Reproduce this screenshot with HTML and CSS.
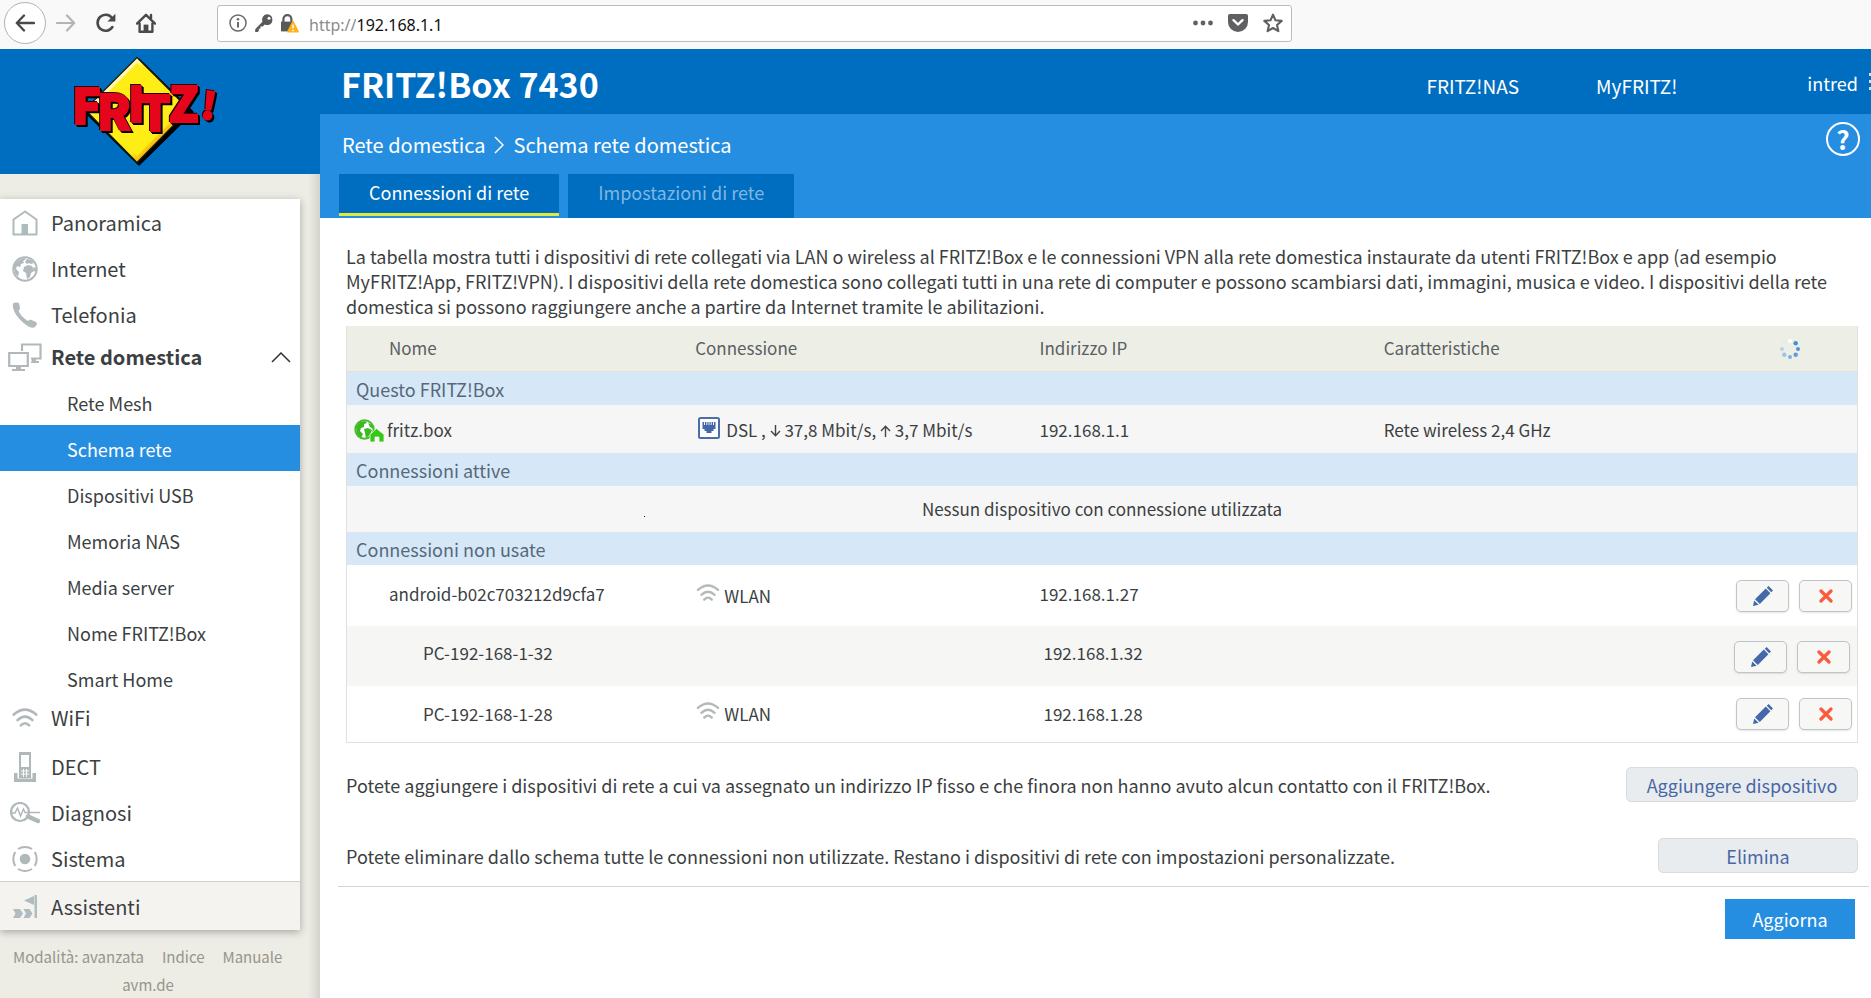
FILE: index.html
```html
<!DOCTYPE html>
<html lang="it">
<head>
<meta charset="utf-8">
<title>FRITZ!Box 7430</title>
<link rel="stylesheet" href="styles.css">
</head>
<body>
<svg class="defs" aria-hidden="true">
  <symbol id="wifi" viewBox="0 0 26 20"><g fill="none" stroke="currentColor" stroke-width="2.6" stroke-linecap="round"><path d="M1.8 6.6Q13-3.2 24.2 6.6"/><path d="M5.6 12Q13 5.2 20.4 12"/><path d="M8.8 17.4Q13 13 17.2 17.4"/></g></symbol>
  <symbol id="pencil" viewBox="0 0 20 20"><path fill="#4468a8" d="M0 20l1.200-5.600 4.400 4.400zM2 13.200L12.800 2.600l4.600 4.600L6.800 18zM13.800 1.800L15.600 0 20 4.400l-1.800 1.800z"/></symbol>
  <symbol id="cross" viewBox="0 0 14 14"><path d="M2 2l10 10M12 2L2 12" stroke="#fb5b3c" stroke-width="3.200" stroke-linecap="round"/></symbol>
</svg>

<div class="browser">
  <button class="back" aria-label="Indietro"><svg width="20" height="18" viewBox="0 0 20 18"><path d="M19 9H2M9 1.500L1.800 9 9 16.500" fill="none" stroke="#4a4a4c" stroke-width="2.400" stroke-linecap="round" stroke-linejoin="round"/></svg></button>
  <button class="tool" aria-label="Avanti"><svg width="20" height="18" viewBox="0 0 20 18"><path d="M1 9h17M11 1.500L18.200 9 11 16.500" fill="none" stroke="#b4b4b5" stroke-width="2.200" stroke-linecap="round" stroke-linejoin="round"/></svg></button>
  <button class="tool" aria-label="Ricarica"><svg width="20" height="20" viewBox="0 0 20 20"><path d="M16.400 14A8 8 0 1 1 16 5" fill="none" stroke="#4a4a4c" stroke-width="2.600" stroke-linecap="round"/><path d="M19.400.8v7.800h-8z" fill="#4a4a4c"/></svg></button>
  <button class="tool" aria-label="Pagina iniziale"><svg width="20" height="20" viewBox="0 0 20 20"><path d="M1 10.600L10 1.800l9 8.800M15 5.500V2M3.600 10.500v8.200h12.800v-8.200" fill="none" stroke="#4a4a4c" stroke-width="2.400" stroke-linecap="round" stroke-linejoin="round"/><path d="M7.600 19v-7.400h4.800V19z" fill="#4a4a4c"/></svg></button>
  <div class="urlbar">
    <svg width="18" height="18" viewBox="0 0 18 18"><circle cx="9" cy="9" r="8" fill="none" stroke="#6a6a6b" stroke-width="1.500"/><path d="M9 8v5.500" stroke="#6a6a6b" stroke-width="2"/><circle cx="9" cy="5.200" r="1.300" fill="#6a6a6b"/></svg>
    <svg width="18" height="18" viewBox="0 0 18 18"><path d="M12.400.3a5.400 5.400 0 0 1 1 10.600c-1.400.3-2.600 0-3.600-.5L7.600 12.600H5.400v2.200H3.800V17L2.600 18H.2v-2.800l7.200-7.400A5.400 5.400 0 0 1 12.400.3z" fill="#5a5a5b"/><circle cx="14" cy="4.200" r="1.500" fill="#fff"/></svg>
    <svg width="18" height="19" viewBox="0 0 18 19"><path d="M2.400 8V5.200a4 4 0 0 1 8 0V8" fill="none" stroke="#5a5a5b" stroke-width="2.200"/><path d="M0 7.600h12V17.400H0z" fill="#5a5a5b"/><path d="M12 7.600l5.200 10.200H6.800z" fill="#fdb21c" stroke="#fdb21c" stroke-width="1.600" stroke-linejoin="round"/><path d="M12 10.500v3.700M12 15.700v1.500" stroke="#fff" stroke-width="1.500"/></svg>
    <label for="url">http://</label><input id="url" type="text" value="192.168.1.1">
    <button class="bare" aria-label="Altre azioni"><svg width="20" height="6" viewBox="0 0 20 6"><g fill="#606062"><circle cx="2.500" cy="3" r="2.400"/><circle cx="10" cy="3" r="2.400"/><circle cx="17.500" cy="3" r="2.400"/></g></svg></button>
    <button class="bare" aria-label="Salva in Pocket"><svg width="20" height="18" viewBox="0 0 20 18"><path d="M1.800 0h16.400Q20 0 20 1.800V8A10 10 0 0 1 0 8V1.800Q0 0 1.800 0z" fill="#606062"/><path d="M5.500 6.200L10 10.500l4.500-4.300" fill="none" stroke="#fff" stroke-width="2.400" stroke-linecap="round" stroke-linejoin="round"/></svg></button>
    <button class="bare" aria-label="Aggiungi ai segnalibri"><svg width="20" height="20" viewBox="0 0 20 20"><path d="M10 1.600l2.500 5.700 6.200.6-4.700 4.100 1.400 6.200L10 15l-5.400 3.200L6 12 1.300 7.900l6.200-.6z" fill="none" stroke="#606062" stroke-width="2.100" stroke-linejoin="round"/></svg></button>
  </div>
</div>

<div class="app">
  <aside class="side">
    <div class="brand">
      <svg class="logo" viewBox="0 0 150 112" role="img" aria-label="FRITZ!">
        <defs><linearGradient id="y" x1="0" y1="0" x2="1" y2="1"><stop offset="0" stop-color="#fff"/><stop offset=".28" stop-color="#fff9b0"/><stop offset=".32" stop-color="#ffee1c"/><stop offset=".68" stop-color="#ffec14"/><stop offset=".76" stop-color="#f5ae10"/><stop offset="1" stop-color="#f0a010"/></linearGradient></defs>
        <path d="M66 5l53 52-53 52-51-50z" fill="#000" stroke="#000" stroke-width="3" stroke-linejoin="round"/>
        <path d="M64 2.500l52 52-52 53-52-53z" fill="url(#y)" stroke="#1b1b00" stroke-width="1.200" stroke-linejoin="round"/>
        <path d="M64 8l46 46.500L64 101 18 54.500z" fill="#ffee16"/>
        <text class="letters" font-size="48" x="-1 24 55 67 96 127" y="69 75 67 76 67 63" rotate="0 0 0 0 0 8">FRITZ<tspan font-size="36">!</tspan></text>
      </svg>
    </div>
    <nav class="menu">
      <a class="item" href="#"><svg width="26" height="26" viewBox="0 0 26 26"><path d="M1.500 9.500L13 1.500l11.500 8V24.500h-23z" fill="none" stroke="#b0b9bb" stroke-width="2" stroke-linejoin="round"/><path d="M9.500 14h6.500v10H9.500z" fill="#acbcbe"/></svg>Panoramica</a>
      <a class="item" href="#"><svg width="26" height="26" viewBox="0 0 26 26"><circle cx="13" cy="13" r="11.700" fill="none" stroke="#b0b9bb" stroke-width="2"/><path d="M3 8l4-4 5-2 2 1-3 2 1 2-3 1-1 3-3-1-1 3 3 3-1 5-3-4-1-6zM15 3l4 1 3 3-3 1-2-1-2 1-2-2zM12 11l4-2 4 1 2 5-3 2-1 4-3 2-1-6-3-2zM21 11l3 1v4l-2-1z" fill="#b0b9bb"/></svg>Internet</a>
      <a class="item" href="#"><svg width="26" height="26" viewBox="0 0 26 26"><path d="M2 .8L5.500.5Q7 .6 7.300 2L8 6.400Q8 7.800 6.500 8.600 8.500 14.500 16 19q1.600-1.700 3-1.200l5 2.200q1.400.8.900 2.200-1 3-4 3.600-3 .2-9-4.500Q2 13 .8 4.500 .5 1.500 2 .8z" fill="#b3babb"/></svg>Telefonia</a>
      <a class="item open" href="#"><svg width="34" height="29" viewBox="0 0 34 29"><g fill="none" stroke="#b0b8ba" stroke-width="2.200"><path d="M14 8V1.500h18.500v14H23"/><path d="M1.200 10h18.600v13H1.200z"/></g><path d="M8 23h5v3h4v2H4v-2h4zM24 16h4v2h3v2h-8z" fill="#b0b8ba"/></svg>Rete domestica<svg class="caret" width="20" height="11" viewBox="0 0 20 11"><path d="M1 10l9-9 9 9" fill="none" stroke="#333" stroke-width="1.500"/></svg></a>
      <a class="sub" href="#">Rete Mesh</a>
      <a class="sub current" href="#">Schema rete</a>
      <a class="sub" href="#">Dispositivi USB</a>
      <a class="sub" href="#">Memoria NAS</a>
      <a class="sub" href="#">Media server</a>
      <a class="sub" href="#">Nome FRITZ!Box</a>
      <a class="sub" href="#">Smart Home</a>
      <a class="item wifi" href="#"><svg width="26" height="20"><use href="#wifi"/></svg>WiFi</a>
      <a class="item" href="#"><svg width="22" height="30" viewBox="0 0 22 30"><path d="M0 21h3.500v5.500h15V21H22v9H0z" fill="#b0b8ba"/><path d="M5 0h12v26H5zM7 3v12h8V3z" fill="#b0b8ba" fill-rule="evenodd"/><path d="M7 19h8M7 22h8M9.500 17v8M12.500 17v8" stroke="#fff" stroke-width=".9"/></svg>DECT</a>
      <a class="item" href="#"><svg width="30" height="22" viewBox="0 0 30 22"><circle cx="10" cy="10" r="9" fill="none" stroke="#b0b8ba" stroke-width="2.200"/><path d="M1 11h4l2.500-5 3 8 3-7 1.500 3.500H30" fill="none" stroke="#b0b8ba" stroke-width="1.400"/><path d="M18 14.500l10 4.500" stroke="#b0b8ba" stroke-width="4.500" stroke-linecap="round"/></svg>Diagnosi</a>
      <a class="item" href="#"><svg width="26" height="26" viewBox="0 0 26 26"><circle cx="13" cy="13" r="5.300" fill="#b0b8ba"/><g fill="none" stroke="#b0b8ba" stroke-width="2"><path d="M6 3Q13-1 20 3M6 23Q13 27 20 23M3.200 6Q-.6 13 3.200 20M22.800 6Q26.600 13 22.800 20"/></g></svg>Sistema</a>
      <a class="item last" href="#"><svg width="26" height="26" viewBox="0 0 26 26"><path d="M22.500 1H25v23h-2.500zM12 6.500L22 2v9zM1 15h7l3 4.500L8 24H1l2.500-4.500zM11.500 15h6l3 4.500-3 4.500h-6l2.500-4.500z" fill="#b0bcbf"/></svg>Assistenti</a>
    </nav>
    <footer class="foot"><a href="#">Modalità: avanzata</a><a href="#">Indice</a><a href="#">Manuale</a><a class="avm" href="#">avm.de</a></footer>
  </aside>

  <div class="page">
    <header class="top">
      <h1>FRITZ!Box 7430</h1>
      <a class="toplink" href="#">FRITZ!NAS</a>
      <a class="toplink my" href="#">MyFRITZ!</a>
      <a class="user" href="#">intred</a>
      <svg class="dots" width="2" height="22" viewBox="0 0 2 22"><path d="M0 2h2v3H0zM0 9h2v3H0zM0 16h2v3H0z" fill="#cfe4f6"/></svg>
    </header>
    <div class="subhead">
      <div class="crumbs"><a href="#">Rete domestica</a><svg width="10" height="18" viewBox="0 0 10 18"><path d="M1 1l8 8-8 8" fill="none" stroke="#fff" stroke-width="1.500"/></svg><span>Schema rete domestica</span>
        <button class="help" aria-label="Guida">?</button></div>
      <div class="tabs"><button class="tab active">Connessioni di rete</button><button class="tab">Impostazioni di rete</button></div>
    </div>
    <main class="content">
      <p class="intro">La tabella mostra tutti i dispositivi di rete collegati via LAN o wireless al FRITZ!Box e le connessioni VPN alla rete domestica instaurate da utenti FRITZ!Box e app (ad esempio MyFRITZ!App, FRITZ!VPN). I dispositivi della rete domestica sono collegati tutti in una rete di computer e possono scambiarsi dati, immagini, musica e video. I dispositivi della rete domestica si possono raggiungere anche a partire da Internet tramite le abilitazioni.</p>
      <table class="net">
        <colgroup><col class="c1"><col class="c2"><col class="c3"><col class="c4"><col class="c5"></colgroup>
        <thead><tr><th class="name">Nome</th><th>Connessione</th><th>Indirizzo IP</th><th>Caratteristiche</th><th class="spin"><svg width="20" height="20" viewBox="0 0 20 20"><circle cx="10" cy="2" r="2" fill="#fff"/><circle cx="15.700" cy="4.300" r="2.200" fill="#3f90d6"/><circle cx="18" cy="10" r="2" fill="#4f97d4"/><circle cx="15.700" cy="15.700" r="2.200" fill="#5a9fd8"/><circle cx="10" cy="18" r="2" fill="#7cb1dc"/><circle cx="4.300" cy="15.700" r="2.200" fill="#9cc6e2"/><circle cx="2" cy="10" r="2" fill="#b9d3e2"/><circle cx="4.300" cy="4.300" r="2" fill="#e2ecee"/></svg></th></tr></thead>
        <tbody>
        <tr class="group"><td colspan="5">Questo FRITZ!Box</td></tr>
        <tr class="box"><td class="own"><div class="cell"><svg width="30" height="23" viewBox="0 0 30 23"><circle cx="10.500" cy="10.500" r="9.200" fill="#fff" stroke="#45c02a" stroke-width="2"/><path d="M2 8l4-5 5-1 2 2-3 1v3L7 9l-1 3 3 3-2 4-4-4zM14 4l4 2 1 4-3-2zM10 10l4-1 4 2-2 5-4 3-1-5z" fill="#3cb822"/><path d="M22.500 9.500L30 15.500V23h-5v-5h-4v5h-5v-7.500z" fill="#35c914" stroke="#f6f6f6" stroke-width=".8"/></svg>fritz.box</div></td>
          <td><div class="cell dsl"><svg width="22" height="22" viewBox="0 0 22 22"><rect x="1" y="1" width="20" height="20" rx="1.500" fill="#fff" stroke="#4b6da9" stroke-width="2"/><path d="M4.500 5h13v7h-2v2h-2v2h-5v-2h-2v-2h-2z" fill="#4468a8"/><path d="M6.500 5v3M8.800 5v3M11 5v3M13.200 5v3M15.500 5v3" stroke="#fff" stroke-width=".9"/></svg><span>DSL , <svg width="11" height="12" viewBox="0 0 11 12"><path d="M5.500 0v10.500M1 6l4.500 4.700L10 6" fill="none" stroke="#444" stroke-width="1.400"/></svg> 37,8 Mbit/s, <svg width="11" height="12" viewBox="0 0 11 12"><path d="M5.500 12V1.500M1 6l4.500-4.700L10 6" fill="none" stroke="#444" stroke-width="1.400"/></svg> 3,7 Mbit/s</span></div></td><td>192.168.1.1</td><td colspan="2">Rete wireless 2,4 GHz</td></tr>
        <tr class="group"><td colspan="5">Connessioni attive</td></tr>
        <tr class="none"><td colspan="5">Nessun dispositivo con connessione utilizzata</td></tr>
        <tr class="group"><td colspan="5">Connessioni non usate</td></tr>
        <tr class="dev"><td class="name">android-b02c703212d9cfa7</td><td class="low"><div class="cell wl"><svg width="24" height="18"><use href="#wifi"/></svg><span>WLAN</span></div></td><td>192.168.1.27</td><td></td><td class="low"><div class="btns"><button aria-label="Modifica"><svg width="20" height="20"><use href="#pencil"/></svg></button><button aria-label="Elimina"><svg width="14" height="14"><use href="#cross"/></svg></button></div></td></tr>
        <tr class="dev alt"><td class="pc">PC-192-168-1-32</td><td></td><td class="in">192.168.1.32</td><td></td><td class="low"><div class="btns"><button aria-label="Modifica"><svg width="20" height="20"><use href="#pencil"/></svg></button><button aria-label="Elimina"><svg width="14" height="14"><use href="#cross"/></svg></button></div></td></tr>
        <tr class="dev end"><td class="pc">PC-192-168-1-28</td><td><div class="cell wl"><svg width="24" height="18"><use href="#wifi"/></svg><span>WLAN</span></div></td><td class="in">192.168.1.28</td><td></td><td><div class="btns"><button aria-label="Modifica"><svg width="20" height="20"><use href="#pencil"/></svg></button><button aria-label="Elimina"><svg width="14" height="14"><use href="#cross"/></svg></button></div></td></tr>
        </tbody>
      </table>
      <div class="line"><p>Potete aggiungere i dispositivi di rete a cui va assegnato un indirizzo IP fisso e che finora non hanno avuto alcun contatto con il FRITZ!Box.</p><button class="soft wide">Aggiungere dispositivo</button></div>
      <div class="line"><p>Potete eliminare dallo schema tutte le connessioni non utilizzate. Restano i dispositivi di rete con impostazioni personalizzate.</p><button class="soft">Elimina</button></div>
    </main>
    <div class="bottom"><button class="primary">Aggiorna</button></div>
  </div>
</div>
</body>
</html>
```
FILE: styles.css
```css
* { box-sizing: border-box; }
body { margin: 0; min-height: 100vh; display: flex; flex-direction: column; background: #fff; color: #3c3f42; font: 17px/24px "Noto Sans CJK JP", "Noto Sans", sans-serif; }
a { color: inherit; text-decoration: none; }
button { font: inherit; padding: 0; border: 0; background: none; color: inherit; display: flex; align-items: center; justify-content: center; }
p { margin: 0; }
svg { flex: none; display: block; }
.defs { position: absolute; width: 0; height: 0; }

.browser { height: 49px; display: flex; align-items: center; background: #f9f9f9; padding: 0 4px 3px; }
.back { width: 42px; height: 42px; border: 1px solid #b4b4b4; border-radius: 50%; background: #fff; }
.tool { width: 20px; margin-left: 10px; }
.tool + .tool { margin-left: 20px; }
.urlbar { margin-left: 61px; width: 1075px; height: 37px; display: flex; align-items: center; background: #fff; border: 1px solid #bcbcbc; border-radius: 3px; padding: 0 8px 0 11px; gap: 8px; }
.urlbar label { margin-left: 2px; margin-right: -8px; color: #8b8b8b; font: 16px/24px "Noto Sans", sans-serif; padding-top: 3px; }
.urlbar input { flex: 1; min-width: 0; border: 0; padding: 3px 0 0; outline: 0; color: #111; font: 16px/24px "Noto Sans", sans-serif; }
.urlbar .bare + .bare { margin-left: 7px; }

.app { flex: 1; display: grid; grid-template-columns: 320px minmax(0, 1fr); }
.side { display: flex; flex-direction: column; background: linear-gradient(90deg, #edece5 308px, #d3d2cc 320px); }
.brand { height: 125px; background: #006ec0; padding: 6px 0 0 73px; }
.logo { width: 150px; height: 112px; overflow: visible; }
.letters { font-family: "Noto Sans CJK JP", sans-serif; font-weight: 900; fill: #e5061c; stroke: #e5061c; stroke-width: 2; filter: drop-shadow(-1px -1px 0 #2a0000) drop-shadow(2px 2px 0 #000); }
.menu { width: 300px; margin-top: 25px; background: #fff; box-shadow: 0 2px 8px rgba(0, 0, 0, .3); }
.item { height: 46px; display: grid; grid-template-columns: 49px 1fr auto; column-gap: 2px; align-items: center; font-size: 20px; padding: 1px 9px 0 0; }
.item svg:first-child { justify-self: center; color: #b0b8ba; }
.item.open { height: 42px; font-weight: 700; padding-bottom: 3px; }
.sub { height: 46px; display: flex; align-items: center; padding: 2px 0 0 67px; font-size: 18px; }
.sub.current { background: #268ee0; color: #fff; }
.item.wifi { height: 42px; padding-bottom: 10px; }
.item.last { height: 49px; background: #f4f3f0; border-top: 1px solid #cfd1d0; }
.foot { width: 300px; padding: 15px 13px 0; display: flex; flex-wrap: wrap; gap: 4px 18px; font-size: 15px; color: #96958c; }
.avm { width: 100%; text-align: center; padding-right: 4px; }

.page { background: #fff; }
.top { height: 65px; background: #006ec0; color: #fff; display: flex; align-items: center; padding-left: 21px; font-size: 18px; }
h1 { margin: 4px auto 0 0; font-size: 34px; line-height: 40px; font-weight: 700; }
.toplink { margin-top: 9px; font-size: 19px; }
.my { margin-left: 77px; }
.user { margin: 2px 11px 0 130px; }
.subhead { height: 104px; background: #268ee0; color: #fff; display: flex; flex-direction: column; justify-content: space-between; }
.crumbs { height: 60px; display: flex; align-items: center; padding: 2px 11px 0 22px; gap: 9px; font-size: 20px; }
.help { width: 34px; height: 34px; margin: 0 0 12px auto; border: 2px solid #fff; border-radius: 50%; font-size: 26px; font-weight: 700; line-height: 28px; }
.tabs { display: flex; gap: 9px; padding-left: 19px; align-items: flex-start; height: 44px; }
.tab { height: 44px; padding: 0 30px 8px; background: #006ec0; color: #7fb6e2; font-size: 18px; }
.tab.active { height: 42px; padding-bottom: 3px; border-bottom: 3px solid #e4e83a; color: #fff; }

.content { padding: 26px 13px 13px 26px; }
.intro { line-height: 25px; font-size: 18px; margin-bottom: 7px; }
.net { width: 100%; table-layout: fixed; border-collapse: separate; border-spacing: 0; border: 1px solid #e0e0dc; border-top: 0; }
.c1 { width: 22.2%; } .c2 { width: 22.8%; } .c3 { width: 22.8%; } .c4 { width: 22.8%; }
.net th, .net td { padding: 0 0 0 13px; text-align: left; font-weight: 400; }
.net th { height: 46px; background: #edeee6; color: #5a5f62; padding-bottom: 2px; border-bottom: 1px solid #e0e0dc; }
.net .name { padding-left: 42px; }
.net .spin { padding-left: 65px; padding-bottom: 0; }
.net .group td { height: 33px; background: #d6e8f8; color: #56697a; padding-left: 9px; font-size: 18px; }
.net .box td { height: 48px; background: #f6f6f6; padding-top: 2px; }
.net .box .own { padding-left: 7px; }
.cell { display: flex; align-items: center; gap: 3px; }
.dsl { gap: 6px; padding-left: 3px; }
.dsl > svg { margin-bottom: 5px; }
.dsl span svg { display: inline; }
.net .none td { position: relative; height: 46px; background: #f6f6f6; text-align: center; padding: 0; }
.none td::before { content: ""; position: absolute; left: 19.7%; top: 30px; width: 1px; height: 1px; background: #222; }
.net .dev td { height: 61px; padding-bottom: 3px; }
.net .dev.alt td { height: 60px; background: #f6f6f4; padding-bottom: 7px; }
.net .dev.end td { height: 56px; padding-bottom: 1px; }
.net .dev .low, .net .dev.alt .low { padding-bottom: 0; padding-top: 1px; }
.net .dev .pc { padding-left: 76px; }
.net .dev .in { padding-left: 17px; }
.wl { gap: 4px; padding-left: 1px; }
.wl svg { color: #b4b9ba; margin-bottom: 6px; }
.btns { display: flex; justify-content: flex-end; gap: 10px; padding-right: 5px; }
.alt .btns { padding-right: 7px; }
.btns button { width: 53px; height: 32px; background: #f7f7f6; border: 1px solid #bfc4c7; border-radius: 5px; box-shadow: 0 1px 2px rgba(0, 0, 0, .1); }
.line { display: flex; align-items: center; justify-content: space-between; margin-top: 24px; min-height: 35px; font-size: 18px; }
.line + .line { margin-top: 36px; }
.soft { width: 200px; height: 35px; background: #e8ecef; border: 1px solid #d8dcdd; border-radius: 5px; color: #4867a5; font-size: 18px; }
.soft.wide { width: 232px; }
.bottom { margin: 0 2px 0 18px; border-top: 1px solid #d4d6d6; padding: 12px 14px; display: flex; justify-content: flex-end; }
.primary { width: 130px; height: 40px; background: #268ee0; color: #fff; font-size: 18px; }
```
